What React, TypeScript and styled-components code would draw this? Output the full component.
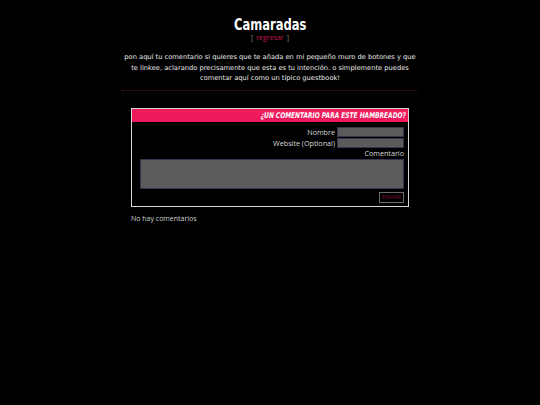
import styled, { createGlobalStyle } from 'styled-components';

const GlobalStyle = createGlobalStyle`
  html, body {
    margin: 0;
    padding: 0;
    background: #000;
  }
  body {
    width: 540px;
    height: 405px;
    overflow: hidden;
  }
`;

const Page = styled.div`
  display: flex;
  flex-direction: column;
  align-items: center;
  padding-top: 16px;
`;

const Title = styled.h1`
  margin: 0;
  font-family: "DejaVu Sans Condensed", "DejaVu Sans", sans-serif;
  font-weight: bold;
  font-size: 16px;
  line-height: 18px;
  color: #fff;
  transform: scaleX(0.8);
`;

const Back = styled.div`
  font-family: "Open Sans", sans-serif;
  font-size: 7px;
  line-height: 8px;
  color: #888;
`;

const BackLink = styled.a`
  color: #c0144f;
  text-decoration: none;
  margin: 0 3px;
`;

const Intro = styled.p`
  width: 310px;
  margin: 10px 0 0;
  font-family: "DejaVu Sans", sans-serif;
  font-size: 6.7px;
  line-height: 10.5px;
  color: #e8e8e8;
  text-align: center;
`;

const Divider = styled.hr`
  width: 296px;
  margin: 6px 0 0;
  border: 0;
  border-top: 1px dotted #5a0f2a;
`;

const Card = styled.section`
  width: 276px;
  margin-top: 17px;
  border: 1px solid #d8d8d8;
  background: #000;
`;

const CardHeader = styled.h2`
  display: flex;
  align-items: center;
  justify-content: flex-end;
  margin: 0;
  background: #ee1a5c;
  height: 13px;
  padding: 0 2px;
`;

const HeaderText = styled.span`
  display: block;
  font-family: "DejaVu Sans Condensed", "DejaVu Sans", sans-serif;
  font-weight: bold;
  font-style: italic;
  font-size: 7.8px;
  line-height: 13px;
  color: #fff;
  white-space: nowrap;
  transform: scaleX(0.84);
  transform-origin: right center;
`;

const Form = styled.form`
  display: flex;
  flex-direction: column;
  align-items: flex-end;
  padding: 5px 4px 3px 8px;
`;

const Row = styled.label`
  display: flex;
  align-items: center;
  gap: 2px;
  font-family: "Open Sans", sans-serif;
  font-size: 7.2px;
  line-height: 11px;
  color: #d8d8d8;
`;

const TextInput = styled.input`
  box-sizing: border-box;
  width: 67px;
  height: 10px;
  margin: 0;
  padding: 0;
  background: #5b5b5b;
  border: 1px solid #3b3350;
`;

const Label = styled.div`
  font-family: "Open Sans", sans-serif;
  font-size: 7.2px;
  line-height: 9px;
  color: #d8d8d8;
`;

const TextArea = styled.textarea`
  box-sizing: border-box;
  display: block;
  width: 100%;
  height: 30px;
  margin: 1px 0 0;
  padding: 0;
  resize: none;
  background: #5b5b5b;
  border: 1px solid #3b3350;
`;

const Submit = styled.button`
  margin-top: 3px;
  height: 11px;
  padding: 0 2px;
  background: #000;
  border: 1px solid #6a6a6a;
  font-family: "Open Sans", sans-serif;
  font-size: 5.5px;
  line-height: 9px;
  color: #7a1030;
`;

const Empty = styled.div`
  width: 278px;
  margin-top: 7px;
  font-family: "Open Sans", sans-serif;
  font-size: 7px;
  line-height: 10px;
  color: #d0d0d0;
`;

export default function App() {
  return (
    <>
      <GlobalStyle />
      <Page>
        <Title>Camaradas</Title>
        <Back>
          [<BackLink href="#">regresar</BackLink>]
        </Back>
        <Intro>
          pon aquí tu comentario si quieres que te añada en mi pequeño muro de botones y que
          <br />
          te linkee, aclarando precisamente que esta es tu intención. o simplemente puedes
          <br />
          comentar aquí como un típico guestbook!
        </Intro>
        <Divider />
        <Card>
          <CardHeader>
            <HeaderText>¿UN COMENTARIO PARA ESTE HAMBREADO?</HeaderText>
          </CardHeader>
          <Form onSubmit={(e) => e.preventDefault()}>
            <Row>
              Nombre
              <TextInput type="text" />
            </Row>
            <Row>
              Website (Optional)
              <TextInput type="text" />
            </Row>
            <Label>Comentario</Label>
            <TextArea />
            <Submit type="submit">ENVIAR</Submit>
          </Form>
        </Card>
        <Empty>No hay comentarios</Empty>
      </Page>
    </>
  );
}
